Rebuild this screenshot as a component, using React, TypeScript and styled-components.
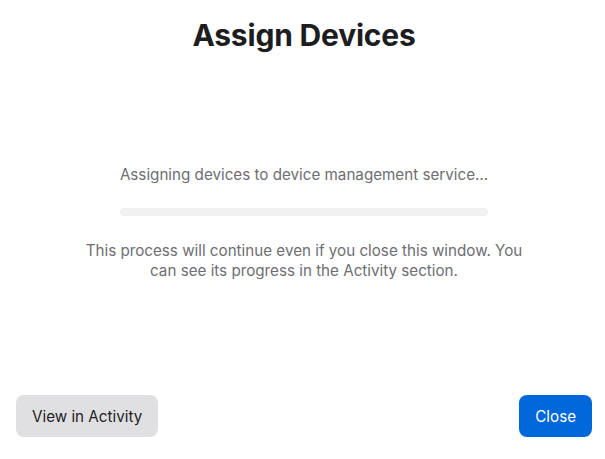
import React from 'react';
import styled, { createGlobalStyle } from 'styled-components';

const GlobalStyle = createGlobalStyle`
  html, body {
    margin: 0;
    padding: 0;
    background: #ffffff;
  }
  body {
    font-family: Inter, "Noto Sans", sans-serif;
    -webkit-font-smoothing: antialiased;
  }
`;

const Sheet = styled.div`
  height: 459px;
  display: flex;
  flex-direction: column;
  box-sizing: border-box;
  padding: 16px 13px 22px 16px;
`;

const Title = styled.h1`
  margin: 0;
  text-align: center;
  font-size: 30px;
  font-weight: 700;
  letter-spacing: -0.2px;
  line-height: 38px;
  color: #1d1d1f;
`;

const Body = styled.div`
  flex: 1;
  display: flex;
  flex-direction: column;
  align-items: center;
  padding-top: 111px;
`;

const Status = styled.p`
  margin: 0;
  font-size: 15.2px;
  line-height: 20px;
  color: #6e6e73;
`;

const Track = styled.div`
  width: 368px;
  height: 8px;
  margin-top: 23px;
  border-radius: 4px;
  background: #f1f1f2;
  overflow: hidden;
`;

const Fill = styled.div`
  height: 100%;
  background: #0068da;
`;

const Note = styled.p`
  margin: 25px 0 0;
  max-width: 450px;
  text-align: center;
  font-size: 15.2px;
  line-height: 20px;
  color: #6e6e73;
`;

const Footer = styled.div`
  display: flex;
  justify-content: space-between;
  align-items: center;
`;

const Button = styled.button<{ primary?: boolean }>`
  height: 42px;
  padding: 0 16px;
  border: none;
  border-radius: 8px;
  font-family: inherit;
  font-size: 15.2px;
  cursor: pointer;
  background: ${(p) => (p.primary ? '#0068da' : '#e0e0e2')};
  color: ${(p) => (p.primary ? '#ffffff' : '#1d1d1f')};
`;

export default function App() {
  const progress = 0;
  return (
    <>
      <GlobalStyle />
      <Sheet>
        <Title>Assign Devices</Title>
        <Body>
          <Status>Assigning devices to device management service…</Status>
          <Track>
            <Fill style={{ width: `${progress}%` }} />
          </Track>
          <Note>
            This process will continue even if you close this window. You can see its progress in the
            Activity section.
          </Note>
        </Body>
        <Footer>
          <Button>View in Activity</Button>
          <Button primary>Close</Button>
        </Footer>
      </Sheet>
    </>
  );
}
